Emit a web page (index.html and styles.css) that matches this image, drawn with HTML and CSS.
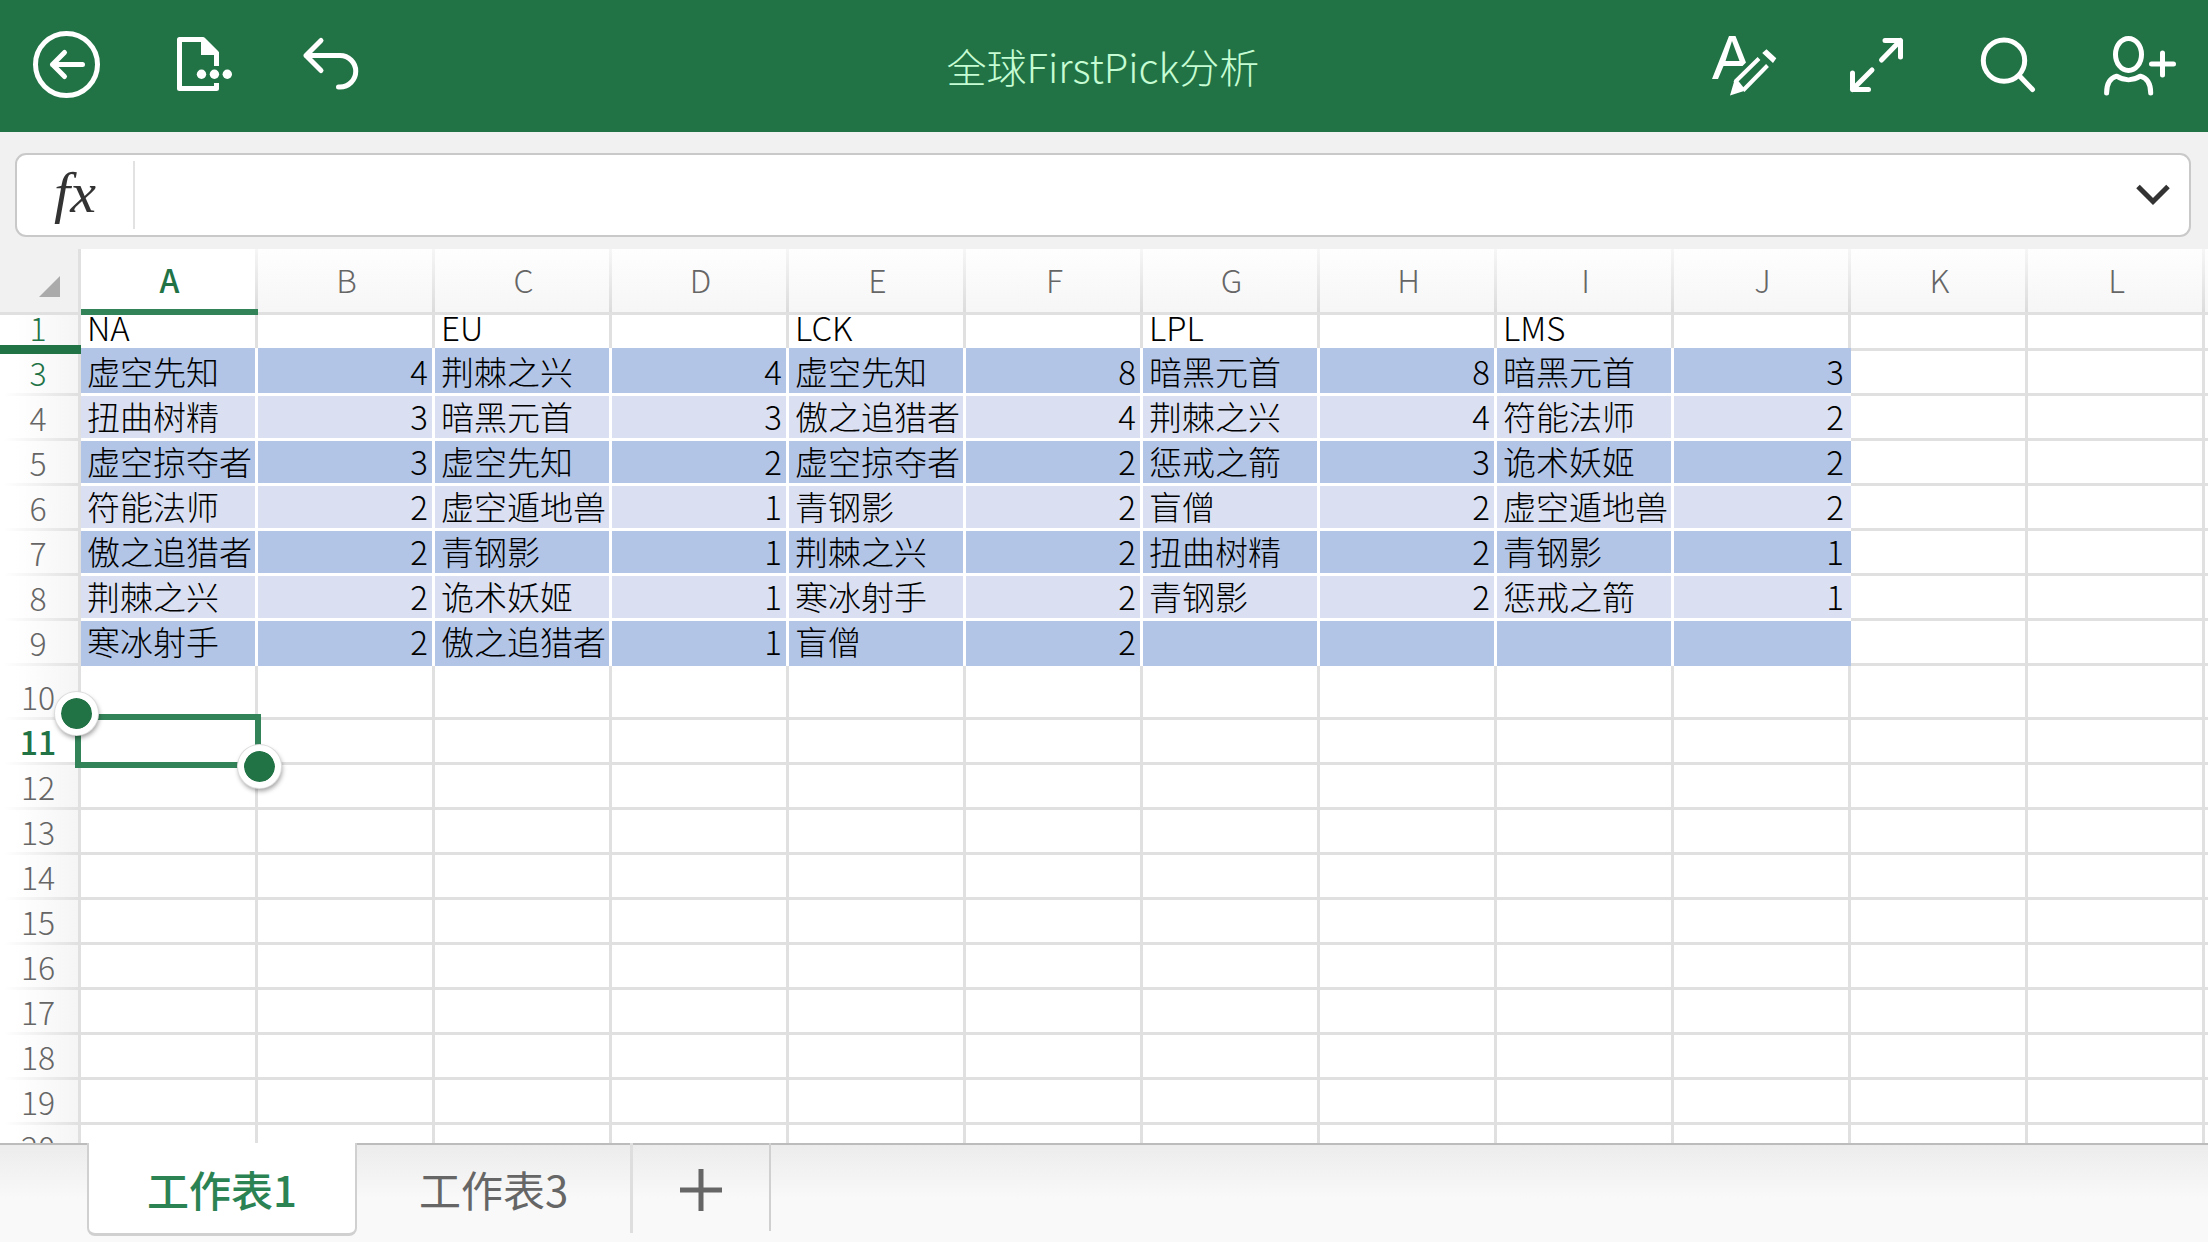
FILE: index.html
```html
<!DOCTYPE html>
<html lang="zh-CN">
<head>
<meta charset="utf-8">
<meta name="viewport" content="width=device-width, initial-scale=1">
<title>全球FirstPick分析</title>
<link rel="stylesheet" href="styles.css">
</head>
<body>
<header class="topbar">
  <div class="tools">
    <button class="tool" type="button" aria-label="返回">
      <svg viewBox="0 0 72 72"><circle cx="36.5" cy="34.5" r="31"/><path d="M52.5 34.5H22.5M34.5 22.5l-12 12 12 12"/></svg>
    </button>
    <button class="tool" type="button" aria-label="文件">
      <svg viewBox="0 0 72 72"><path class="square" d="M54.5 36V23L41 9.500H17.500V58.500H54.500V53"/><path class="solid" d="M39 8h3l15 15v2H39z"/><circle class="solid" cx="39.500" cy="44.300" r="4.700"/><circle class="solid" cx="52.400" cy="44.300" r="4.700"/><circle class="solid" cx="65.300" cy="44.300" r="4.700"/></svg>
    </button>
    <button class="tool" type="button" aria-label="撤消">
      <svg viewBox="0 0 72 72"><path d="M27 10.500L12 25.500l15 15M12 25.500H46a15.750 15.750 0 0 1 0 31.500h-1.500"/></svg>
    </button>
  </div>
  <h1 class="doc-title">全球FirstPick分析</h1>
  <div class="tools tools-end">
    <button class="tool" type="button" aria-label="编辑">
      <svg viewBox="0 0 72 72"><path class="solid" d="M4 49L21 6h6.500L38 32.500L34.500 36H15.500L10 49zM17.500 31H31.500L24 11z"/><path class="solid" d="M58.500 19.200l9.800 9L65 33 54.200 22.900zM22 65.600l4.600-15.800L36 61z"/><path class="thin" d="M27.500 51.500L51 28.500M35 60.500L59.500 35.500M27 50l8 10"/></svg>
    </button>
    <button class="tool" type="button" aria-label="全屏">
      <svg viewBox="0 0 72 72"><path d="M45 10.500H60.500V27M60.500 10.500L41.500 30M12.500 43V59.500H28.500M12.500 59.500L32 40"/></svg>
    </button>
    <button class="tool" type="button" aria-label="搜索">
      <svg viewBox="0 0 72 72"><circle cx="32" cy="30.600" r="20.700"/><path d="M48 46.500L60.500 59.500"/></svg>
    </button>
    <button class="tool" type="button" aria-label="共享">
      <svg viewBox="0 0 72 72"><ellipse cx="24.500" cy="24.400" rx="13" ry="16"/><path d="M2.600 63C2.600 54 6 48 12.700 46.200C20 50.800 29 50.800 36.300 46.200C43 48 46.700 54 46.700 63M58.500 23V45M47.500 34H69.500"/></svg>
    </button>
  </div>
</header>

<div class="formula-area">
  <div class="formula">
    <label class="fx" for="formula">fx</label>
    <input class="formula-input" id="formula" type="text">
    <button class="expand" type="button" aria-label="展开编辑栏">
      <svg viewBox="0 0 36 24"><path d="M3 3.500L18 18.500L33 3.500"/></svg>
    </button>
  </div>
</div>

<main class="pane">
<table class="sheet">
<colgroup><col class="c-row"><col class="c-data" span="12"><col></colgroup>
<thead>
<tr><th class="corner"><button class="select-all" type="button" aria-label="全选"></button></th><th class="current" scope="col">A</th><th scope="col">B</th><th scope="col">C</th><th scope="col">D</th><th scope="col">E</th><th scope="col">F</th><th scope="col">G</th><th scope="col">H</th><th scope="col">I</th><th scope="col">J</th><th scope="col">K</th><th scope="col">L</th><td></td></tr>
</thead>
<tbody>
<tr class="titles"><th class="near" scope="row">1</th><td>NA</td><td></td><td>EU</td><td></td><td>LCK</td><td></td><td>LPL</td><td></td><td>LMS</td><td></td><td></td><td></td><td></td></tr>
<tr class="band dark first"><th class="near" scope="row">3</th><td>虚空先知</td><td>4</td><td>荆棘之兴</td><td>4</td><td>虚空先知</td><td>8</td><td>暗黑元首</td><td>8</td><td>暗黑元首</td><td>3</td><td></td><td></td><td></td></tr>
<tr class="band"><th scope="row">4</th><td>扭曲树精</td><td>3</td><td>暗黑元首</td><td>3</td><td>傲之追猎者</td><td>4</td><td>荆棘之兴</td><td>4</td><td>符能法师</td><td>2</td><td></td><td></td><td></td></tr>
<tr class="band dark"><th scope="row">5</th><td>虚空掠夺者</td><td>3</td><td>虚空先知</td><td>2</td><td>虚空掠夺者</td><td>2</td><td>惩戒之箭</td><td>3</td><td>诡术妖姬</td><td>2</td><td></td><td></td><td></td></tr>
<tr class="band"><th scope="row">6</th><td>符能法师</td><td>2</td><td>虚空遁地兽</td><td>1</td><td>青钢影</td><td>2</td><td>盲僧</td><td>2</td><td>虚空遁地兽</td><td>2</td><td></td><td></td><td></td></tr>
<tr class="band dark"><th scope="row">7</th><td>傲之追猎者</td><td>2</td><td>青钢影</td><td>1</td><td>荆棘之兴</td><td>2</td><td>扭曲树精</td><td>2</td><td>青钢影</td><td>1</td><td></td><td></td><td></td></tr>
<tr class="band"><th scope="row">8</th><td>荆棘之兴</td><td>2</td><td>诡术妖姬</td><td>1</td><td>寒冰射手</td><td>2</td><td>青钢影</td><td>2</td><td>惩戒之箭</td><td>1</td><td></td><td></td><td></td></tr>
<tr class="band dark last"><th scope="row">9</th><td>寒冰射手</td><td>2</td><td>傲之追猎者</td><td>1</td><td>盲僧</td><td>2</td><td></td><td></td><td></td><td></td><td></td><td></td><td></td></tr>
<tr class="tall"><th scope="row">10</th><td></td><td></td><td></td><td></td><td></td><td></td><td></td><td></td><td></td><td></td><td></td><td></td><td></td></tr>
<tr><th class="active-row" scope="row">11</th><td class="active-cell"><div class="selection"><span class="handle start"></span><span class="handle end"></span></div></td><td></td><td></td><td></td><td></td><td></td><td></td><td></td><td></td><td></td><td></td><td></td><td></td></tr>
<tr><th scope="row">12</th><td></td><td></td><td></td><td></td><td></td><td></td><td></td><td></td><td></td><td></td><td></td><td></td><td></td></tr>
<tr><th scope="row">13</th><td></td><td></td><td></td><td></td><td></td><td></td><td></td><td></td><td></td><td></td><td></td><td></td><td></td></tr>
<tr><th scope="row">14</th><td></td><td></td><td></td><td></td><td></td><td></td><td></td><td></td><td></td><td></td><td></td><td></td><td></td></tr>
<tr><th scope="row">15</th><td></td><td></td><td></td><td></td><td></td><td></td><td></td><td></td><td></td><td></td><td></td><td></td><td></td></tr>
<tr><th scope="row">16</th><td></td><td></td><td></td><td></td><td></td><td></td><td></td><td></td><td></td><td></td><td></td><td></td><td></td></tr>
<tr><th scope="row">17</th><td></td><td></td><td></td><td></td><td></td><td></td><td></td><td></td><td></td><td></td><td></td><td></td><td></td></tr>
<tr><th scope="row">18</th><td></td><td></td><td></td><td></td><td></td><td></td><td></td><td></td><td></td><td></td><td></td><td></td><td></td></tr>
<tr><th scope="row">19</th><td></td><td></td><td></td><td></td><td></td><td></td><td></td><td></td><td></td><td></td><td></td><td></td><td></td></tr>
<tr><th scope="row">20</th><td></td><td></td><td></td><td></td><td></td><td></td><td></td><td></td><td></td><td></td><td></td><td></td><td></td></tr>
</tbody>
</table>
</main>

<nav class="tabs" aria-label="工作表">
  <button class="tab tab-active" type="button">工作表1</button>
  <button class="tab" type="button">工作表3</button>
  <button class="add" type="button" aria-label="新建工作表">
    <svg viewBox="0 0 42 42"><path d="M21 0V42M0 21H42"/></svg>
  </button>
</nav>
</body>
</html>
```

FILE: styles.css
```css
* {
  box-sizing: border-box;
}

:root {
  --green: #217346;
  --accent: #338359;
  --line: #e0e0e0;
  --chrome: #f1f1f1;
  --grey-text: #666;
}

body {
  margin: 0;
  height: 100vh;
  display: flex;
  flex-direction: column;
  overflow: hidden;
  background: var(--chrome);
  color: #000;
  font-family: "Noto Sans CJK SC", sans-serif;
  font-weight: 300;
}

button,
input {
  margin: 0;
  padding: 0;
  border: 0;
  background: none;
  font: inherit;
  color: inherit;
}

svg {
  display: block;
  fill: none;
}

/* Top bar */
.topbar {
  flex: none;
  height: 132px;
  padding: 0 32px 0 30px;
  display: grid;
  grid-template-columns: 1fr auto 1fr;
  align-items: center;
  background: var(--green);
}

.tools {
  display: flex;
  gap: 60px;
}

.tools-end {
  justify-content: flex-end;
}

.tool {
  width: 72px;
  height: 72px;
}

.tool svg {
  width: 72px;
  height: 72px;
  stroke: #fff;
  stroke-width: 5;
  stroke-linecap: round;
  stroke-linejoin: round;
}

.tool .square {
  stroke-linecap: butt;
}

.tool .thin {
  stroke-width: 4;
  stroke-linecap: butt;
}

.tool .solid {
  fill: #fff;
  fill-rule: evenodd;
  stroke: none;
}

.doc-title {
  margin: 0;
  font-size: 40px;
  font-weight: 300;
  line-height: 56px;
  color: #c6fcd3;
}

/* Formula bar */
.formula-area {
  flex: none;
  padding: 21px 17px 12px 15px;
}

.formula {
  height: 84px;
  display: flex;
  align-items: center;
  border: 2px solid #c9c9c9;
  border-radius: 11px;
  background: #fff;
}

.fx {
  width: 118px;
  height: 68px;
  border-right: 2px solid #e2e2e2;
  text-align: center;
  font: italic 58px/64px "Liberation Serif", serif;
  color: #333;
}

.formula-input {
  flex: 1;
  min-width: 0;
  height: 68px;
  padding: 0 16px;
  font-size: 33px;
}

.expand {
  width: 72px;
  height: 68px;
  display: grid;
  place-items: center;
}

.expand svg {
  width: 36px;
  height: 24px;
  stroke: #333;
  stroke-width: 5;
}

/* Sheet */
.pane {
  flex: 1;
  min-height: 0;
  overflow: hidden;
  background: #fff;
}

.sheet {
  width: 100%;
  table-layout: fixed;
  border-spacing: 0;
  font-size: 33px;
  line-height: 22px;
}

.c-row {
  width: 81px;
}

.c-data {
  width: 177px;
}

.sheet th,
.sheet td {
  height: 45px;
  padding: 0 4px 11px 6px;
  border: 0 solid var(--line);
  border-width: 0 3px 3px 0;
  vertical-align: bottom;
  white-space: nowrap;
  text-align: left;
}

.sheet td:nth-child(odd) {
  text-align: right;
}

.sheet th {
  font-size: 32px;
  font-weight: 300;
  text-align: center;
  color: var(--grey-text);
}

.sheet td:last-child {
  padding: 0;
  border-right: 0;
}

.sheet thead th,
.sheet thead td {
  height: 66px;
  padding: 0 0 22px;
  border-right: 0;
  background:
    linear-gradient(#f6f6f6, #dcdcdc) right / 3px 100% no-repeat,
    linear-gradient(#fefefe, #f6f6f6);
}

.sheet thead td {
  background: linear-gradient(#fefefe, #f6f6f6);
}

.sheet thead .current {
  border-bottom: 6px solid var(--accent);
  padding-bottom: 19px;
  background: linear-gradient(#f6f6f6, #dcdcdc) right / 3px 100% no-repeat, #fff;
  font-weight: 500;
  color: var(--green);
}

.sheet thead .corner {
  padding: 0 21px 15px 0;
  background: linear-gradient(var(--line), var(--line)) right / 3px 100% no-repeat, var(--chrome);
}

.select-all {
  display: block;
  width: 21px;
  height: 21px;
  margin-left: auto;
  background: #ababab;
  clip-path: polygon(100% 0, 100% 100%, 0 100%);
}

.sheet tbody th {
  position: relative;
  padding: 0 2px 13px 0;
  border-bottom: 0;
  background:
    linear-gradient(90deg, #fff 5%, var(--line)) bottom / 100% 3px no-repeat,
    linear-gradient(90deg, #fff 20%, #f5f5f5);
}

.sheet .titles th,
.sheet .titles td {
  height: 33px;
  padding-bottom: 10px;
  border-bottom: 0;
}

.sheet .near {
  color: var(--green);
}

.sheet .first th,
.sheet .first td {
  height: 48px;
}

.sheet .first td {
  border-top: 3px solid var(--line);
}

/* Marks the hidden row between 1 and 3 */
.first th::before {
  content: "";
  position: absolute;
  top: -3px;
  left: 0;
  width: 81px;
  height: 9px;
  background: var(--green);
}

.sheet .band td:nth-child(-n+11) {
  border-top: 0;
  border-color: #fff;
  background: #dae0f2;
  background-clip: padding-box;
}

.sheet .dark td:nth-child(-n+11) {
  background-color: #b2c5e7;
}

.sheet .band td:nth-child(11) {
  padding-right: 7px;
  border-right: 0;
}

.sheet .last td:nth-child(-n+11) {
  padding-bottom: 14px;
  border-bottom: 0;
}

.sheet .tall th,
.sheet .tall td {
  height: 54px;
}

.sheet tbody .active-row {
  background: linear-gradient(90deg, #fff 5%, var(--line)) bottom / 100% 3px no-repeat, #fff;
  font-weight: 500;
  color: var(--green);
}

.active-cell {
  position: relative;
}

/* Selection frame lies over the grid lines */
.selection {
  position: absolute;
  z-index: 1;
  inset: -6px;
  border: 6px solid var(--accent);
}

.handle {
  position: absolute;
  width: 43px;
  height: 43px;
  border: 6px solid #fff;
  border-radius: 50%;
  background: var(--green);
  background-clip: padding-box;
  box-shadow: 0 0 0 1px #ddd, 1px 3px 5px #0006;
}

.start {
  top: -28px;
  left: -26px;
}

.end {
  right: -26px;
  bottom: -26px;
}

/* Sheet tabs */
.tabs {
  flex: none;
  height: 99px;
  padding-left: 87px;
  display: flex;
  align-items: flex-start;
  background: linear-gradient(#bcbcbc 2px, #ececec 2px, #f9f9f9 56px);
}

.tab {
  height: 90px;
  padding: 0 62px;
  border-right: 3px solid #dedede;
  background-clip: padding-box;
  font-size: 42px;
  font-weight: 400;
  line-height: 92px;
  color: var(--grey-text);
}

.tab-active {
  height: 93px;
  padding: 0 58px;
  border: 2px solid #d0d0d0;
  border-width: 0 2px 3px;
  border-radius: 0 0 8px 8px;
  background: #fff;
  font-weight: 500;
  color: #2b8354;
}

.add {
  width: 138px;
  height: 88px;
  padding-top: 6px;
  display: grid;
  place-items: center;
  border-right: 2px solid #d0d0d0;
}

.add svg {
  width: 42px;
  height: 42px;
  stroke: var(--grey-text);
  stroke-width: 5;
}
```
